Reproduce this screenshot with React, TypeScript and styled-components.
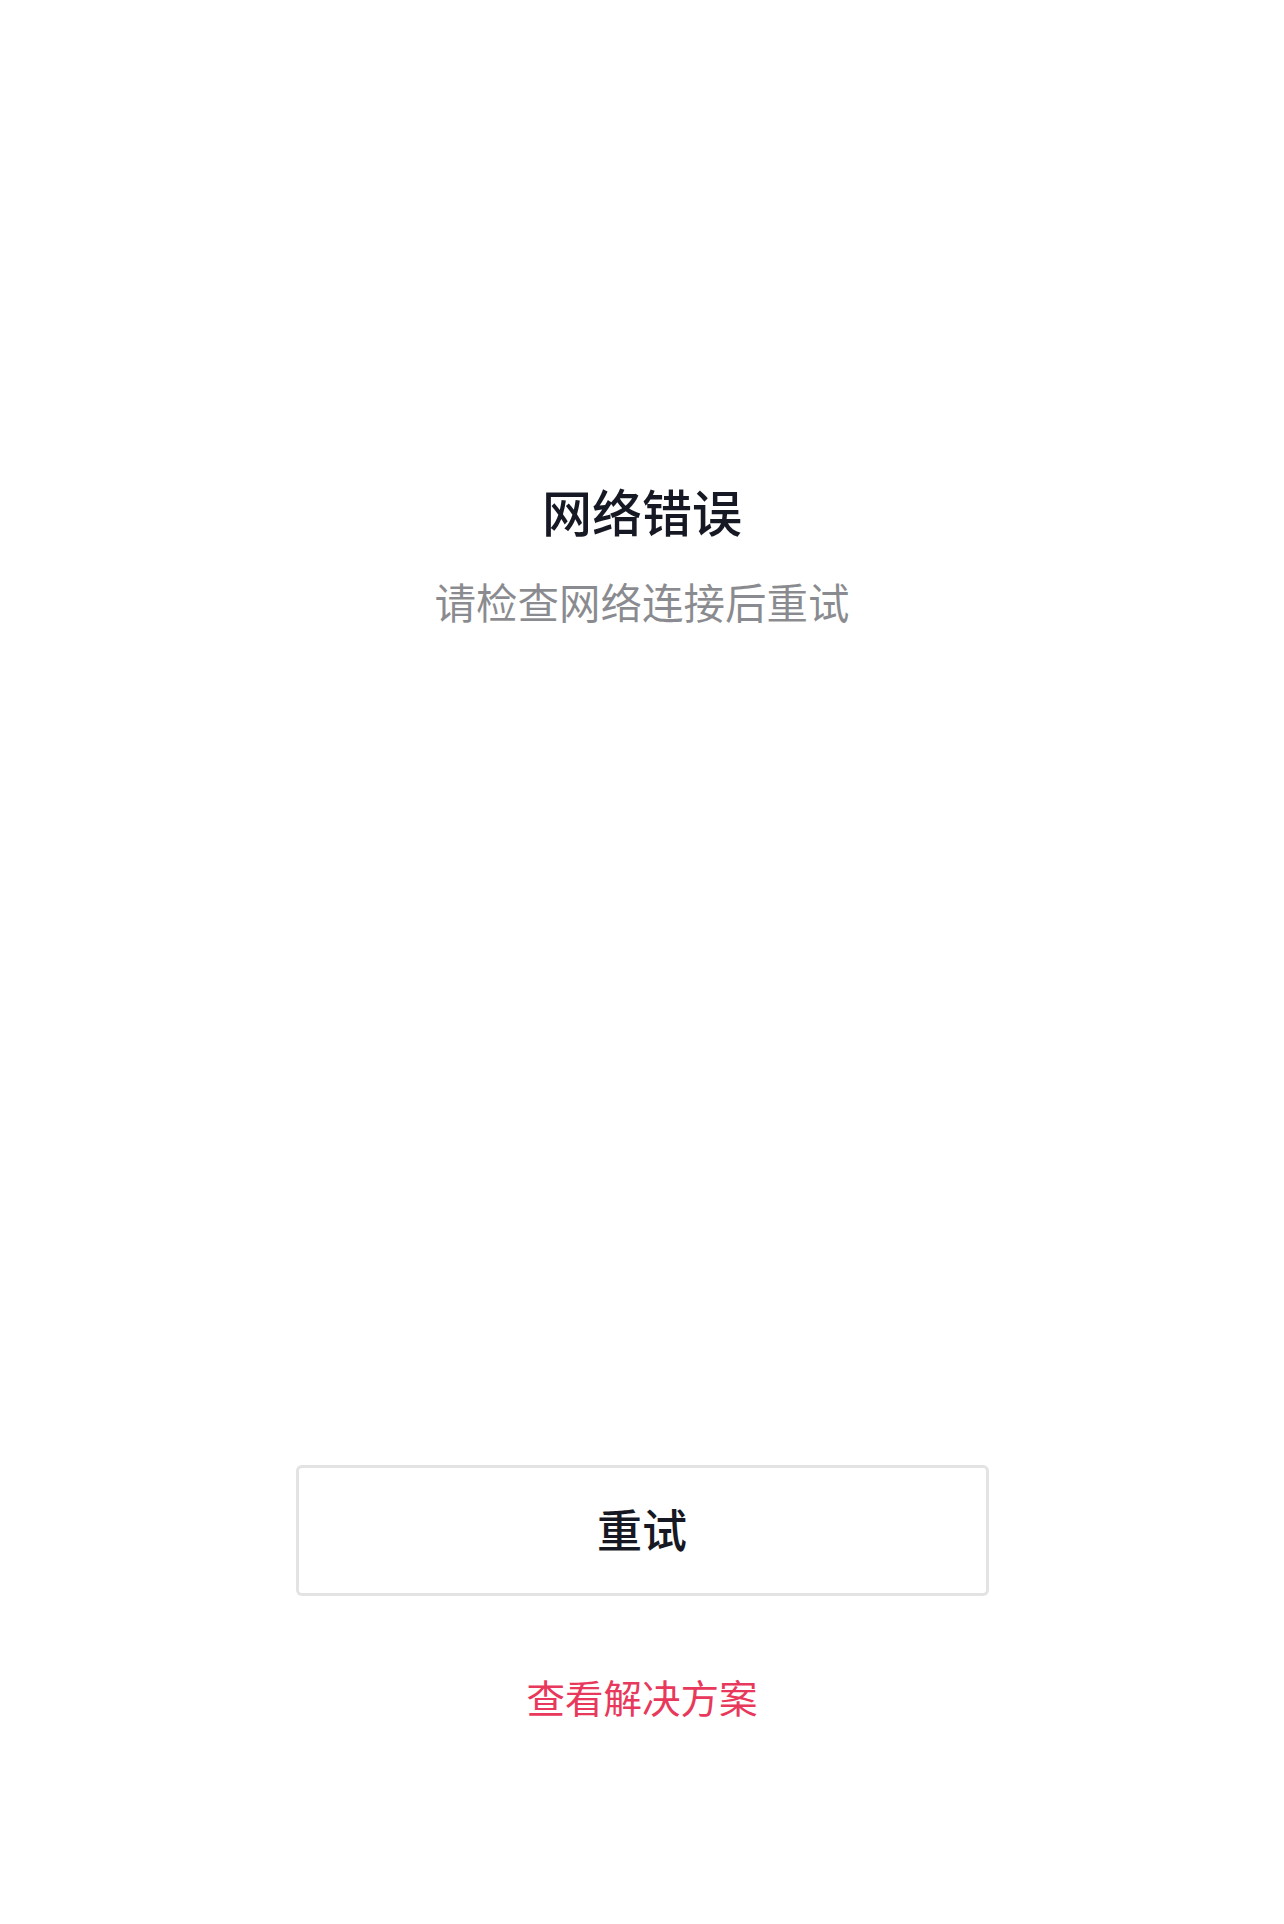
import React from "react";
import styled, { createGlobalStyle } from "styled-components";

const Global = createGlobalStyle`
  html, body { margin: 0; padding: 0; background: #ffffff; }
  body { font-family: "Noto Sans CJK SC", "Noto Sans", sans-serif; }
  * { box-sizing: border-box; }
`;

const Page = styled.div`
  width: 1284px;
  min-height: 1924px;
  background: #ffffff;
  display: flex;
  flex-direction: column;
  align-items: center;
  padding-top: 480px;
`;

const Title = styled.h1`
  margin: 0;
  font-size: 50px;
  line-height: 60px;
  font-weight: 500;
  color: #161823;
`;

const Subtitle = styled.p`
  margin: 36px 0 0;
  font-size: 41.5px;
  line-height: 50px;
  font-weight: 400;
  color: rgba(22, 24, 35, 0.5);
`;

const RetryButton = styled.button`
  margin-top: 839px;
  width: 693px;
  height: 131px;
  border: 3px solid rgba(22, 24, 35, 0.12);
  border-radius: 6px;
  background: #ffffff;
  font-family: "Noto Sans CJK SC", "Noto Sans", sans-serif;
  font-size: 45px;
  font-weight: 500;
  color: #161823;
  display: flex;
  align-items: center;
  justify-content: center;
  padding: 0 0 5px;
`;

const SolutionLink = styled.a`
  margin-top: 75px;
  font-size: 38.5px;
  line-height: 50px;
  color: #e8385b;
  text-decoration: none;
`;

export default function App() {
  return (
    <>
      <Global />
      <Page>
        <Title>网络错误</Title>
        <Subtitle>请检查网络连接后重试</Subtitle>
        <RetryButton>重试</RetryButton>
        <SolutionLink>查看解决方案</SolutionLink>
      </Page>
    </>
  );
}
